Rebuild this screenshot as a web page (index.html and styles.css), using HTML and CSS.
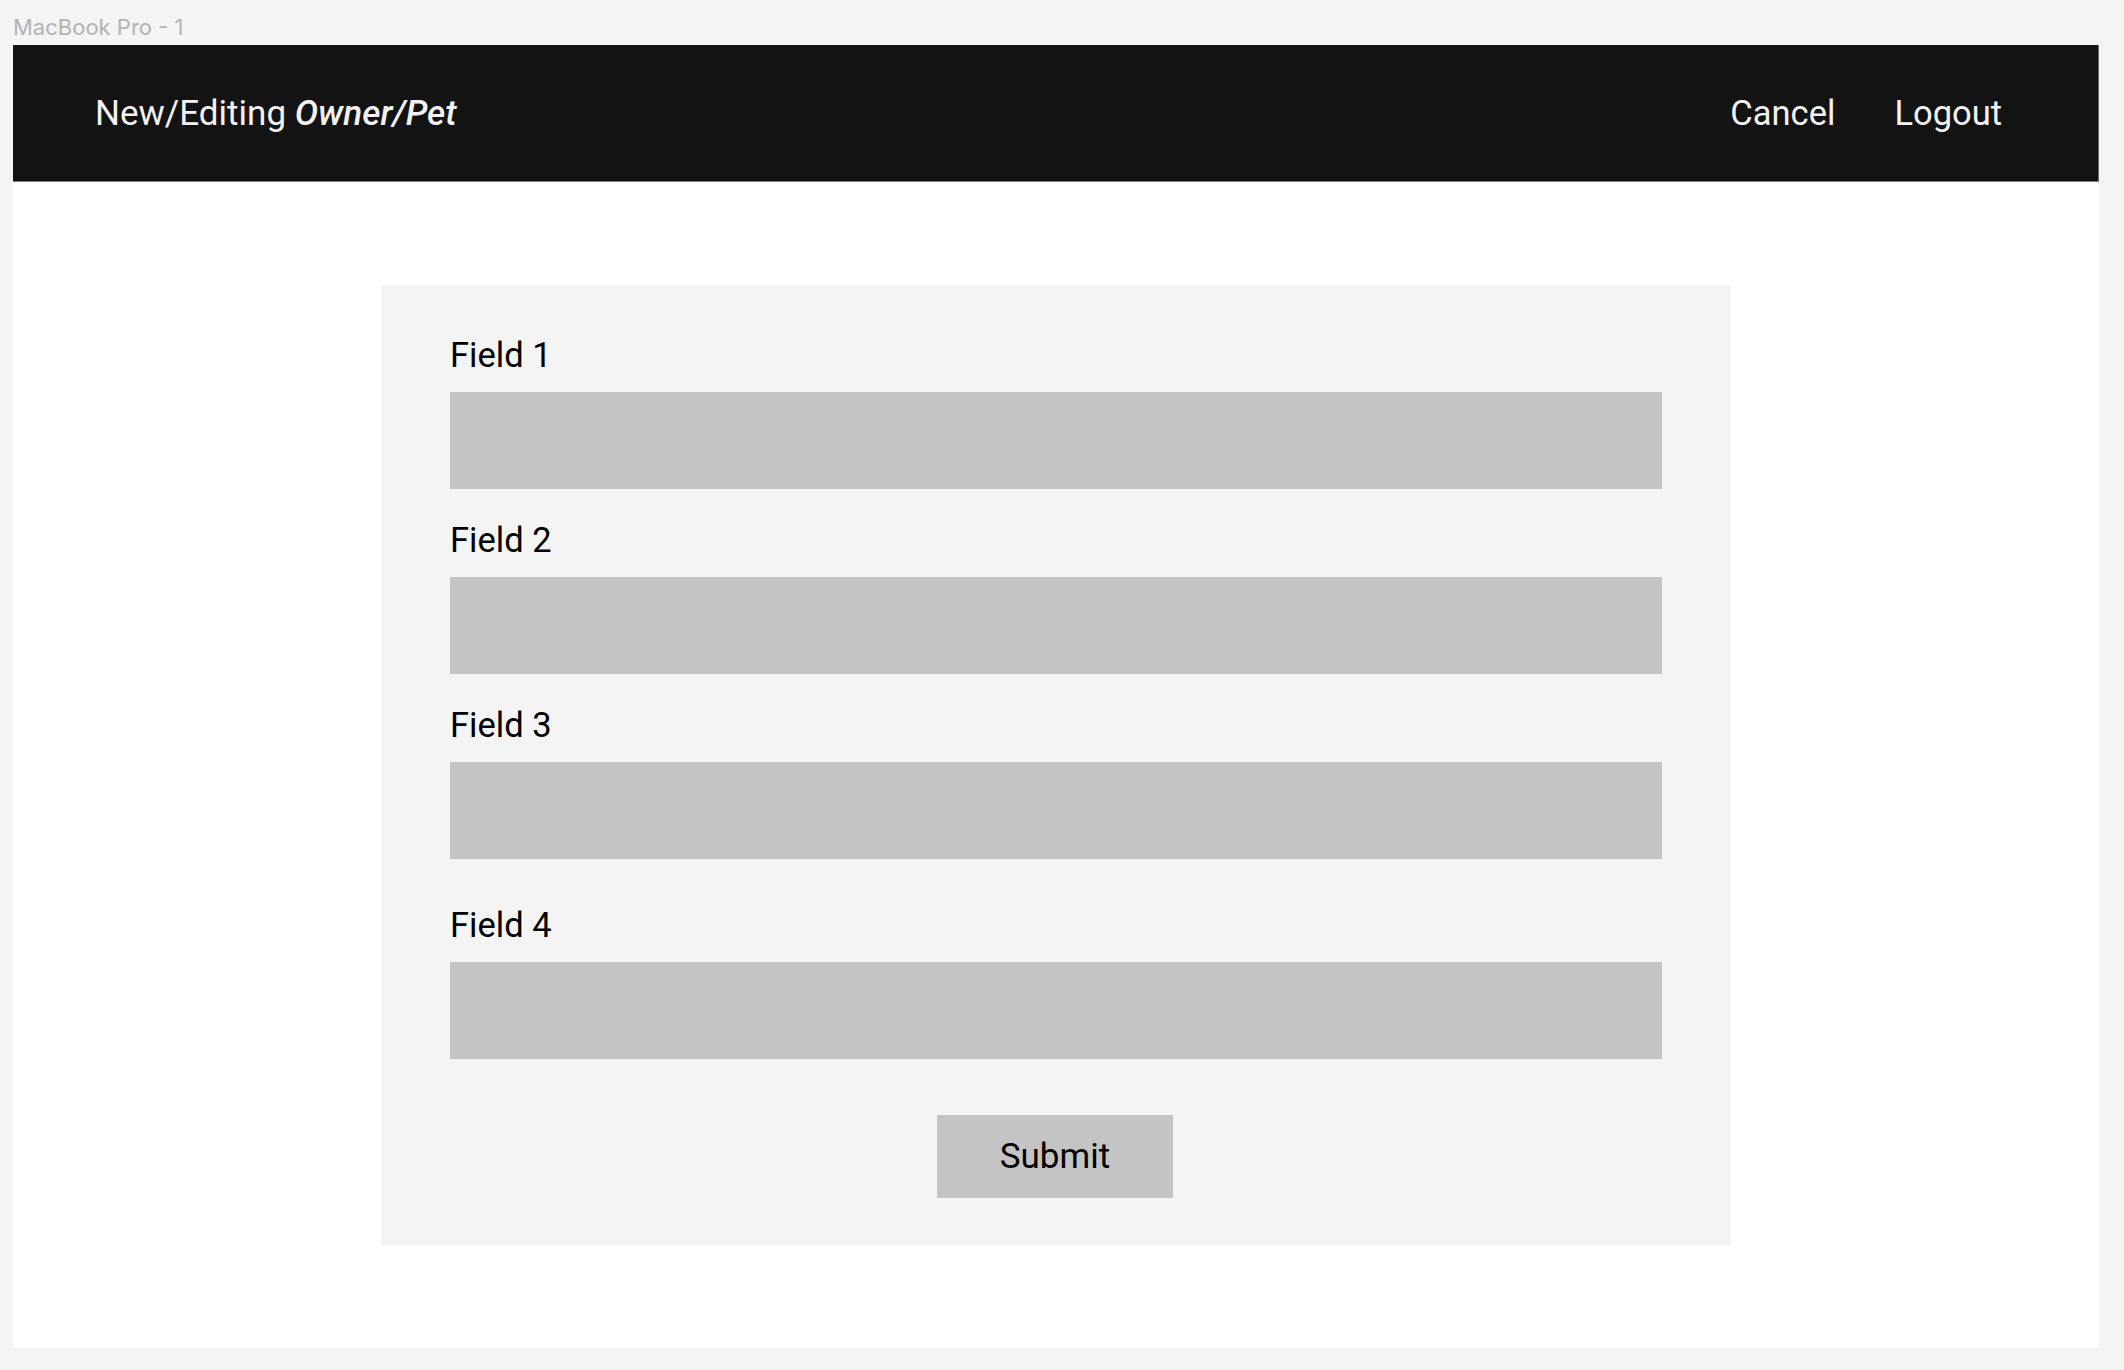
FILE: index.html
```html
<!DOCTYPE html>
<html lang="en">
<head>
<meta charset="utf-8">
<title>New/Editing Owner/Pet</title>
<link rel="stylesheet" href="styles.css">
</head>
<body>
<div class="caption">MacBook Pro - 1</div>
<div class="frame">
  <header class="nav">
    <div class="title">New/Editing <em>Owner/Pet</em></div>
    <nav class="links">
      <a class="link" href="#">Cancel</a>
      <a class="link" href="#">Logout</a>
    </nav>
  </header>
  <main class="content">
    <form class="card">
      <div class="field">
        <label class="label">Field 1</label>
        <div class="input"></div>
      </div>
      <div class="field">
        <label class="label">Field 2</label>
        <div class="input"></div>
      </div>
      <div class="field">
        <label class="label">Field 3</label>
        <div class="input"></div>
      </div>
      <div class="field field-last">
        <label class="label">Field 4</label>
        <div class="input"></div>
      </div>
      <div class="actions">
        <button class="submit" type="button">Submit</button>
      </div>
    </form>
  </main>
</div>
</body>
</html>
```
FILE: styles.css
```css
* { box-sizing: border-box; }

html, body {
  margin: 0;
  padding: 0;
  background: #f4f4f4;
  width: 2124px;
  height: 1370px;
  overflow: hidden;
}

body {
  font-family: Roboto, "Liberation Sans", sans-serif;
}

.caption {
  height: 45px;
  padding: 15px 0 0 13px;
  font-family: Inter, "Liberation Sans", sans-serif;
  font-size: 22px;
  line-height: 25px;
  color: #b3b3b3;
}

.frame {
  margin-left: 13px;
  width: 2086px;
  height: 1303px;
  background: #ffffff;
  display: flex;
  flex-direction: column;
}

.nav {
  height: 137px;
  flex: none;
  background: #131313;
  border-bottom: 1px solid #7d7d7d;
  border-right: 1px solid #6a6a6a;
  display: flex;
  align-items: center;
  justify-content: space-between;
  padding: 0 96px 0 82px;
  color: #f2f2f2;
  font-size: 34.5px;
  line-height: 41px;
}

.title {
  font-size: 35px;
}

.title em {
  font-style: italic;
  font-weight: 500;
}

.links {
  display: flex;
  gap: 59px;
}

.link {
  color: #f2f2f2;
  text-decoration: none;
}

.content {
  flex: 1;
  display: flex;
  align-items: center;
  justify-content: center;
}

.card {
  width: 1350px;
  background: #f4f4f4;
  padding: 50px 69px 47px;
  display: flex;
  flex-direction: column;
}

.field {
  display: flex;
  flex-direction: column;
  margin-bottom: 31px;
}

.field-last {
  margin-top: 15px;
  margin-bottom: 0;
}

.label {
  font-size: 34.5px;
  line-height: 41px;
  color: #000000;
  margin-bottom: 16px;
}

.input {
  height: 97px;
  background: #c4c4c4;
}

.actions {
  display: flex;
  justify-content: center;
  margin-top: 56px;
}

.submit {
  width: 236px;
  height: 83px;
  border: none;
  background: #c4c4c4;
  font-family: Roboto, "Liberation Sans", sans-serif;
  font-size: 35px;
  color: #000000;
  padding: 0;
  margin-left: -2px;
}
```
